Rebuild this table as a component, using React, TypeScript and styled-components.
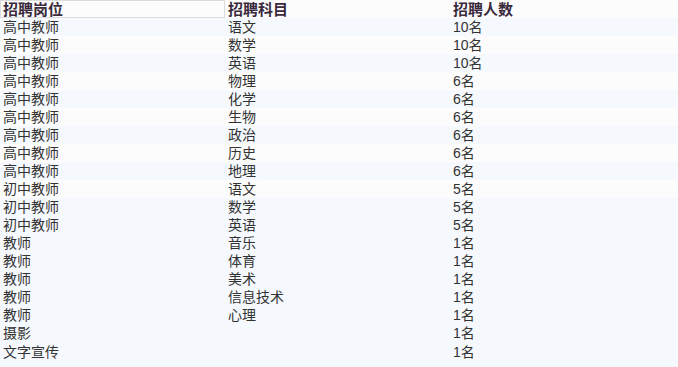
import React from 'react';
import styled, { createGlobalStyle } from 'styled-components';

interface Job {
  post: string;
  subject: string;
  count: string;
}

const jobs: Job[] = [
  { post: '高中教师', subject: '语文', count: '10名' },
  { post: '高中教师', subject: '数学', count: '10名' },
  { post: '高中教师', subject: '英语', count: '10名' },
  { post: '高中教师', subject: '物理', count: '6名' },
  { post: '高中教师', subject: '化学', count: '6名' },
  { post: '高中教师', subject: '生物', count: '6名' },
  { post: '高中教师', subject: '政治', count: '6名' },
  { post: '高中教师', subject: '历史', count: '6名' },
  { post: '高中教师', subject: '地理', count: '6名' },
  { post: '初中教师', subject: '语文', count: '5名' },
  { post: '初中教师', subject: '数学', count: '5名' },
  { post: '初中教师', subject: '英语', count: '5名' },
  { post: '教师', subject: '音乐', count: '1名' },
  { post: '教师', subject: '体育', count: '1名' },
  { post: '教师', subject: '美术', count: '1名' },
  { post: '教师', subject: '信息技术', count: '1名' },
  { post: '教师', subject: '心理', count: '1名' },
  { post: '摄影', subject: '', count: '1名' },
  { post: '文字宣传', subject: '', count: '1名' },
];

const GlobalStyle = createGlobalStyle`
  html, body {
    margin: 0;
    padding: 0;
    background: #f5f9fe;
  }
  body {
    font-family: "Liberation Sans", "Noto Sans CJK SC", sans-serif;
    color: #333;
  }
`;

const App: React.FC = () => {
  return (
    <>
      <GlobalStyle />
      <StyledTable>
        <colgroup>
          <StyledCol />
          <StyledCol />
          <col />
        </colgroup>
        <thead>
          <StyledRow $light>
            <StyledHead $boxed>招聘岗位</StyledHead>
            <StyledHead>招聘科目</StyledHead>
            <StyledHead>招聘人数</StyledHead>
          </StyledRow>
        </thead>
        <tbody>
          {jobs.map((job, i) => (
            <StyledRow key={i} $light={i % 2 === 1 && i < 10} $tall={i === jobs.length - 1}>
              <StyledCell>{job.post}</StyledCell>
              <StyledCell>{job.subject}</StyledCell>
              <StyledCell>{job.count}</StyledCell>
            </StyledRow>
          ))}
        </tbody>
      </StyledTable>
    </>
  );
};

const StyledTable = styled.table`
  width: 678px;
  border-collapse: collapse;
  table-layout: fixed;
`;

const StyledCol = styled.col`
  width: 225px;
`;

const StyledRow = styled.tr<{ $light?: boolean; $tall?: boolean }>`
  height: ${(p) => (p.$tall ? '20px' : '18px')};
  background-color: ${(p) => (p.$light ? '#fcfcfd' : '#f5f9fe')};
`;

const StyledHead = styled.th<{ $boxed?: boolean }>`
  padding: 0 0 0 3px;
  text-align: left;
  font-size: 15px;
  font-weight: bold;
  line-height: 17px;
  color: #3a2a3c;
  box-shadow: ${(p) => (p.$boxed ? 'inset 0 0 0 1px #dcdcdc' : 'none')};
`;

const StyledCell = styled.td`
  padding: 0 0 0 3px;
  font-size: 14px;
  line-height: 18px;
  white-space: nowrap;
  vertical-align: middle;
`;

export default App;
